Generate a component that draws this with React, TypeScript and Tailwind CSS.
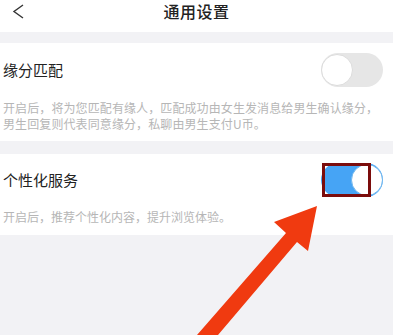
import React from "react";

const font = { fontFamily: '"Noto Sans CJK SC", "Noto Sans", sans-serif' };

function Toggle({ on }: { on: boolean }) {
  return (
    <div
      className={
        "relative w-[62px] h-[34px] rounded-full shrink-0 " +
        (on ? "bg-[#46a4f5]" : "bg-[#e6e6e6]")
      }
    >
      <div
        className={
          "absolute top-[1px] w-[32px] h-[32px] rounded-full bg-white border " +
          (on ? "right-0 border-[#6fb6ee]" : "left-0 border-[#dcdcdc]")
        }
      />
    </div>
  );
}

export default function App() {
  return (
    <div className="relative w-[393px] h-[335px] overflow-hidden bg-[#f2f2f5]" style={font}>
      {/* header */}
      <div className="relative h-[32px] bg-white flex justify-center">
        <svg className="absolute left-[12px] top-[4px]" width="14" height="16" viewBox="0 0 14 16">
          <polyline points="11,1 2,7.5 11,14" fill="none" stroke="#333" strokeWidth="1.4" />
        </svg>
        <div className="text-[16px] leading-[22px] font-medium text-[#222] tracking-[0.5px]">通用设置</div>
      </div>

      {/* section 1 */}
      <div className="mt-[11px] bg-white pb-[9px]">
        <div className="h-[54px] flex items-center justify-between pl-[3px] pr-[10px]">
          <span className="text-[15px] text-[#222]">缘分匹配</span>
          <Toggle on={false} />
        </div>
        <div className="mt-[3px] pl-[3px] text-[12px] leading-[16px] text-[#b6b6b6] tracking-[0.1px]">
          开启后，将为您匹配有缘人，匹配成功由女生发消息给男生确认缘分，
          <br />
          男生回复则代表同意缘分，私聊由男生支付U币。
        </div>
      </div>

      {/* section 2 */}
      <div className="mt-[13px] bg-white pb-[10px]">
        <div className="h-[52px] flex items-center justify-between pl-[3px] pr-[10px]">
          <span className="text-[15px] text-[#222]">个性化服务</span>
          <div className="relative">
            <Toggle on={true} />
            <div className="absolute left-[1px] top-0 w-[49px] h-[34px] border-[3px] border-[#7b0c0c]" />
          </div>
        </div>
        <div className="mt-[3px] pl-[3px] text-[12px] leading-[16px] text-[#b6b6b6]">
          开启后，推荐个性化内容，提升浏览体验。
        </div>
      </div>

      {/* arrow annotation */}
      <svg className="absolute left-0 top-0" width="393" height="335" viewBox="0 0 393 335">
        <polygon
          points="317,206 308,251 297,242 218,335 197,335 286,233 274,222"
          fill="#f03a10"
        />
      </svg>
    </div>
  );
}
